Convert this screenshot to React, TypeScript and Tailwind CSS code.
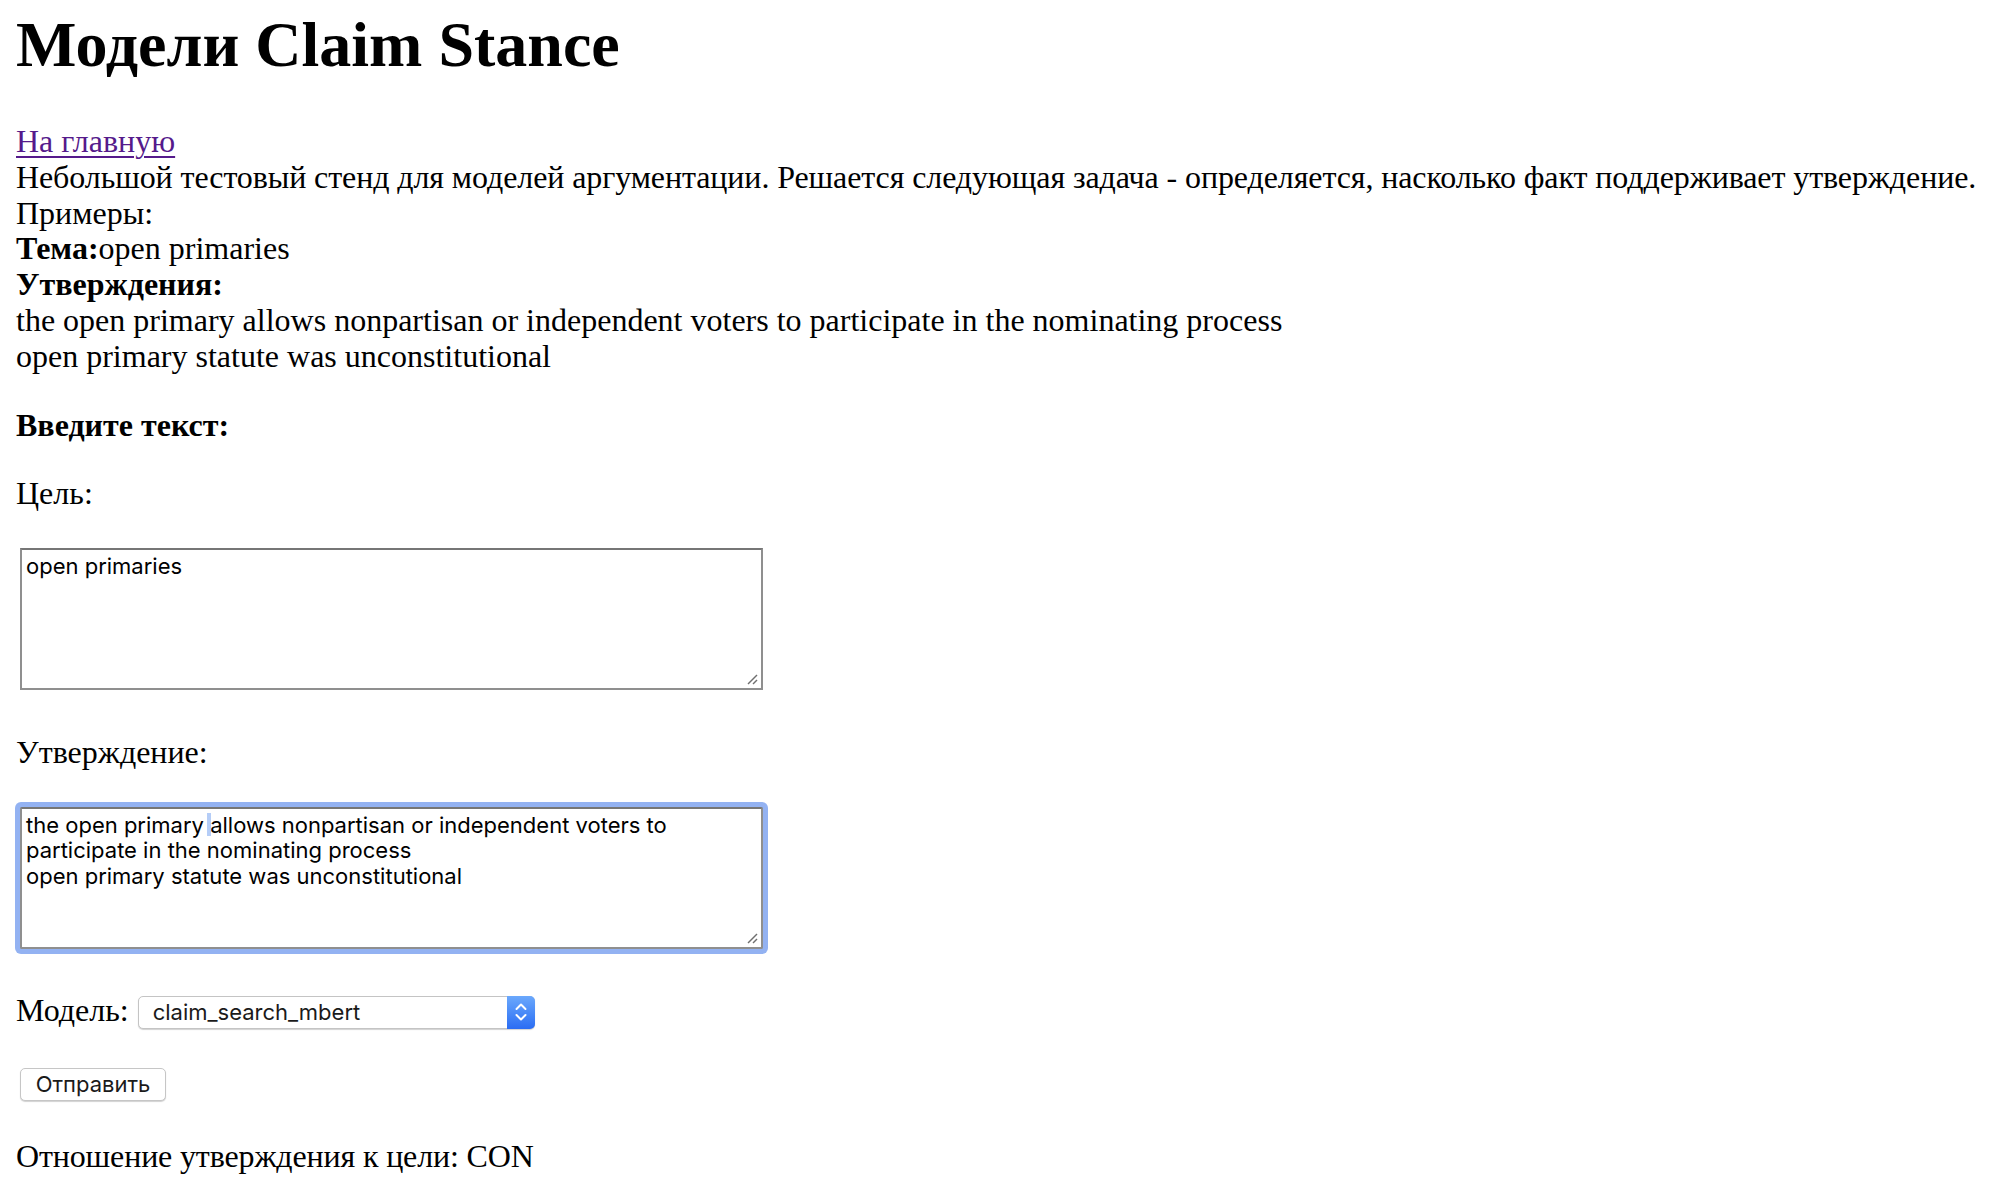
import React from "react";

function Grip() {
  return (
    <svg className="absolute right-[3px] bottom-[3px]" width="12" height="12" viewBox="0 0 12 12">
      <line x1="11" y1="2" x2="2" y2="11" stroke="#6f6f6f" strokeWidth="1.4" />
      <line x1="11" y1="7" x2="7" y2="11" stroke="#6f6f6f" strokeWidth="1.4" />
    </svg>
  );
}

function FakeTextarea({ children, focused }: { children: React.ReactNode; focused?: boolean }) {
  return (
    <div
      className={
        "relative ml-[4px] w-[743px] h-[142px] border-2 border-[#8f8f8f] border-t-[#767676] bg-white px-[4px] pt-[4px] font-['Inter','Noto_Sans',sans-serif] text-[22px] leading-[25.5px] text-black whitespace-pre-wrap " +
        (focused ? "shadow-[0_0_0_5px_#93b2f2] rounded-[2px]" : "")
      }
    >
      {children}
      <Grip />
    </div>
  );
}

export default function App() {
  return (
    <div className="min-h-[1190px] w-full bg-white pl-[16px] pt-[8px] text-black font-['Liberation_Serif','Times_New_Roman',serif]">
      <h1 className="m-0 mb-[43px] text-[64px] leading-[73px] font-bold">Модели Claim Stance</h1>
      <div className="text-[32px] leading-[35.83px]">
        <a href="#" className="text-[#551a8b] underline decoration-[2px] underline-offset-[4px]">
          На главную
        </a>
        <br />
        <span className="tracking-[-0.1px]">
          Небольшой тестовый стенд для моделей аргументации. Решается следующая задача - определяется, насколько факт поддерживает утверждение.
        </span>
        <br />
        Примеры:
        <br />
        <b>Тема:</b>open primaries
        <br />
        <b>Утверждения:</b>
        <br />
        the open primary allows nonpartisan or independent voters to participate in the nominating process
        <br />
        open primary statute was unconstitutional
      </div>

      <p className="mt-[32px] text-[32px] leading-[36px] font-bold">Введите текст:</p>
      <p className="mt-[32px] text-[32px] leading-[36px]">Цель:</p>
      <div className="mt-[37px]">
        <FakeTextarea>open primaries</FakeTextarea>
      </div>

      <p className="mt-[44px] text-[32px] leading-[36px]">Утверждение:</p>
      <div className="mt-[37px]">
        <FakeTextarea focused>
          <span className="relative">
            {"the open primary "}
            <span className="absolute right-[-1px] top-[1px] w-[4px] h-[23px] bg-[#b5cdf7]" />
          </span>
          {"allows nonpartisan or independent voters to participate in the nominating process\nopen primary statute was unconstitutional"}
        </FakeTextarea>
      </div>

      <div className="mt-[43px] flex items-start gap-[9px] text-[32px] leading-[36px]">
        <span>Модель:</span>
        <div className="mt-[4px] flex h-[33px] w-[397px] items-stretch rounded-[5px] border border-[#c4c4c4] bg-white shadow-[0_1px_1px_rgba(0,0,0,0.18)] font-['Inter','Noto_Sans',sans-serif] text-[22px] leading-[31px] text-[#1a1a1a]">
          <span className="flex-1 pl-[14px]">claim_search_mbert</span>
          <span className="flex w-[28px] items-center justify-center rounded-r-[5px] bg-linear-to-b from-[#6ba8fc] to-[#2b6cf3] -my-px -mr-px">
            <svg width="16" height="24" viewBox="0 0 16 24" fill="none">
              <path d="M3.5 9 L8 4.5 L12.5 9" stroke="white" strokeWidth="2" strokeLinecap="round" strokeLinejoin="round" />
              <path d="M3.5 15 L8 19.5 L12.5 15" stroke="white" strokeWidth="2" strokeLinecap="round" strokeLinejoin="round" />
            </svg>
          </span>
        </div>
      </div>

      <button className="ml-[4px] mt-[39px] block h-[33px] w-[146px] rounded-[5px] border border-[#c6c6c6] bg-white shadow-[0_1px_1px_rgba(0,0,0,0.18)] font-['Inter','Noto_Sans',sans-serif] text-[22px] leading-[31px] text-[#1a1a1a]">
        Отправить
      </button>

      <p className="mt-[37px] text-[32px] leading-[36px] tracking-[-0.15px]">Отношение утверждения к цели: CON</p>
    </div>
  );
}
